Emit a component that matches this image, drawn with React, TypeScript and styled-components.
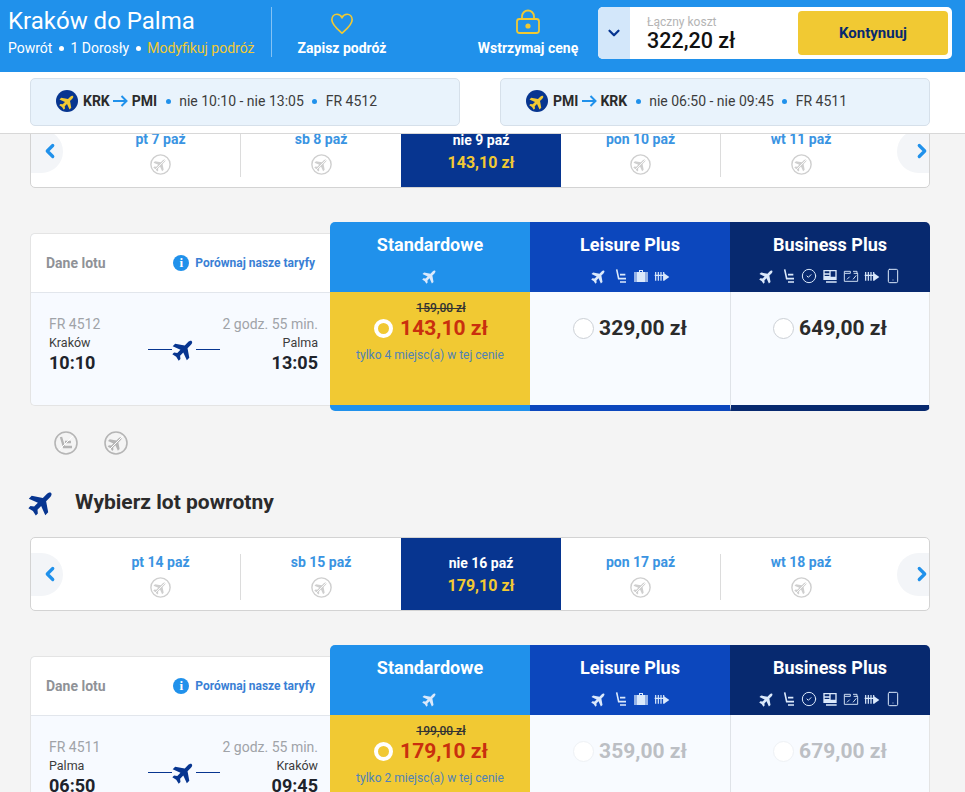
import React from "react";
import styled, { createGlobalStyle } from "styled-components";
import { ChevronDown, ChevronLeft, ChevronRight, CircleCheck, Smartphone } from "lucide-react";

const GlobalStyle = createGlobalStyle`
	* { box-sizing: border-box; }
	html, body { margin: 0; height: 792px; overflow: hidden; }
	body { background: #f4f4f4; font-family: Roboto, "Liberation Sans", sans-serif; color: #2b2b2b; }
`;

const YELLOW = "#f1c933";
const BLUE = "#2091eb";
const ROYAL = "#0c47bd";
const NAVY = "#07296f";
const STRIP_NAVY = "#073590";

const PLANE =
	"M12 1c1.200 0 2 1.500 2 3.500V9l8 5.500V18l-8-3v4.500l2.500 2V24L12 23l-4.500 1v-2.500l2.500-2V15l-8 3v-3.500L10 9V4.500C10 2.500 10.800 1 12 1z";

const Plane = ({ size, color }: { size: number; color: string }) => (
	<svg width={size} height={size} viewBox="0 0 24 24">
		<path d={PLANE} fill={color} transform="rotate(45 12 12)" />
	</svg>
);

const Seat = ({ size, color }: { size: number; color: string }) => (
	<svg width={size} height={size} viewBox="0 0 24 24" fill="none" stroke={color} strokeWidth="2.400">
		<path d="M7 2l3 14h11" />
		<path d="M12 10h8M12 21h9" />
	</svg>
);

const Bag = ({ size, color }: { size: number; color: string }) => (
	<svg width={size} height={size} viewBox="0 0 24 24" fill={color}>
		<path d="M9 3h6v3h4v15H5V6h4zM10.500 4.500V6h3V4.500zM2 6h2v15H2zM20 6h2v15h-2z" fillRule="evenodd" />
	</svg>
);

const FastTrack = ({ size, color }: { size: number; color: string }) => (
	<svg width={size} height={size} viewBox="0 0 24 24" fill="none" stroke={color} strokeWidth="1.800">
		<path d="M2.500 6v13M6.500 6v13M10.500 6v13M14.500 6v13M1 11h15" />
		<path d="M15 8l8 5.500-8 5.500z" fill={color} stroke="none" />
	</svg>
);

const Ticket = ({ size, color }: { size: number; color: string }) => (
	<svg width={size} height={size} viewBox="0 0 24 24" fill={color}>
		<path d="M2 3h20v15H2zM4 5v3h7V5zM13 5v8h7V5zM4 10v2h7v-2zM6 20h16v2H6z" fillRule="evenodd" />
	</svg>
);

const Priority = ({ size, color }: { size: number; color: string }) => (
	<svg width={size} height={size} viewBox="0 0 24 24" fill="none" stroke={color} strokeWidth="1.400">
		<path d="M2 5h9v3H2zM2 8v12h20V8h-6" />
		<path d="M6 17l4-4M15 17l5-6M15 5h6v4" />
	</svg>
);

const NoFlight = ({ size, color, seat }: { size: number; color: string; seat?: boolean }) => (
	<svg width={size} height={size} viewBox="0 0 24 24" fill="none">
		<circle cx="12" cy="12" r="11" stroke={color} strokeWidth="1.600" />
		{seat ? (
			<path d="M7 6l3 10h8M11 11h6" stroke={color} strokeWidth="2.400" />
		) : (
			<g transform="translate(3.500 3.500) scale(0.7)">
				<path d={PLANE} fill={color} transform="rotate(45 12 12)" />
			</g>
		)}
		<path d="M5 19L19 5" stroke="#fff" strokeWidth="1" />
	</svg>
);

const Heart = () => (
	<svg width="24" height="23" viewBox="0 0 26 24" fill="none" stroke={YELLOW} strokeWidth="1.800">
		<path d="M13 22.500C8 18 2 13.500 2 8c0-3.500 2.500-6 5.500-6C9.800 2 11.800 3.200 13 5.500 14.200 3.200 16.200 2 18.500 2c3 0 5.500 2.500 5.500 6 0 5.500-6 10-11 14.500z" />
	</svg>
);

const Padlock = () => (
	<svg width="26" height="26" viewBox="0 0 26 26" fill="none" stroke={YELLOW} strokeWidth="1.800">
		<path d="M7 10V7.500a6 6 0 0 1 12 0V10" />
		<rect x="2" y="10" width="22" height="14" rx="2.500" />
		<circle cx="13" cy="17" r="2.600" fill={YELLOW} stroke="none" />
	</svg>
);

const Arrow = () => (
	<svg width="15" height="12" viewBox="0 0 15 12" fill="none" stroke={BLUE} strokeWidth="2">
		<path d="M0 6h13M8.500 1l5 5-5 5" />
	</svg>
);

const Header = styled.header`
	display: flex;
	align-items: center;
	height: 72px;
	padding-right: 13px;
	background: ${BLUE};
	color: #fff;
`;

const TripInfo = styled.div`
	width: 272px;
	height: 50px;
	margin-top: -8px;
	padding-left: 8px;
	border-right: 1px solid rgba(255, 255, 255, 0.45);
`;

const TripTitle = styled.div`
	font-size: 24px;
	line-height: 28px;
`;

const TripMeta = styled.div`
	display: flex;
	align-items: center;
	margin-top: 5px;
	font-size: 14px;
	line-height: 16px;
`;

const Dot = styled.span<{ $gap: number; $color?: string }>`
	width: 5px;
	height: 5px;
	margin: 0 ${(p) => p.$gap}px;
	border-radius: 50%;
	background: ${(p) => p.$color ?? "#fff"};
`;

const TripLink = styled.span`
	color: ${YELLOW};
`;

const Actions = styled.div`
	flex: 1;
	align-self: flex-start;
	padding-top: 5px;
	display: flex;
	justify-content: space-between;
`;

const ActionItem = styled.div`
	width: 140px;
	display: flex;
	flex-direction: column;
	align-items: center;
	gap: 5px;
	font-size: 14px;
	font-weight: 700;
	line-height: 16px;
`;

const ActionIcon = styled.div`
	height: 30px;
	display: flex;
	align-items: flex-end;
`;

const PriceBox = styled.div`
	width: 354px;
	height: 52px;
	margin-top: -6px;
	display: flex;
	align-items: center;
	background: #fff;
	border-radius: 5px;
	overflow: hidden;
`;

const PriceToggle = styled.div`
	width: 32px;
	height: 100%;
	display: flex;
	align-items: center;
	justify-content: center;
	background: #d3e7fa;
	color: ${STRIP_NAVY};
`;

const PriceText = styled.div`
	flex: 1;
	padding: 3px 0 0 17px;
`;

const PriceLabel = styled.div`
	font-size: 12px;
	line-height: 13px;
	color: #b4b4b4;
`;

const PriceValue = styled.div`
	font-size: 21.500px;
	font-weight: 500;
	line-height: 24px;
	color: #111;
`;

const ContinueButton = styled.button`
	width: 150px;
	height: 44px;
	margin-right: 4px;
	border: 0;
	border-radius: 4px;
	background: ${YELLOW};
	color: ${NAVY};
	font-family: inherit;
	font-size: 15px;
	font-weight: 700;
`;

const SummaryBar = styled.div`
	height: 62px;
	padding: 6px 35px 0 30px;
	display: flex;
	justify-content: space-between;
	background: #fff;
	border-bottom: 1px solid #d8d8d8;
`;

const SummaryCard = styled.div`
	width: 430px;
	height: 48px;
	padding: 0 0 2px 25px;
	display: flex;
	align-items: center;
	background: #e9f3fc;
	border: 1px solid #d6e0ea;
	border-radius: 5px;
	font-size: 14px;
	color: #3c3c3c;
`;

const PlaneBadge = styled.span`
	width: 22px;
	height: 22px;
	margin-right: 5px;
	display: flex;
	align-items: center;
	justify-content: center;
	border-radius: 50%;
	background: ${STRIP_NAVY};
`;

const Route = styled.span`
	display: flex;
	align-items: center;
	gap: 3.500px;
	font-weight: 700;
	color: #2b2b2b;
`;

const Main = styled.main`
	height: 658px;
	overflow: hidden;
	padding: 0 35px 0 30px;
`;

const Scrolled = styled.div`
	margin-top: -20px;
`;

const Strip = styled.div`
	height: 74px;
	display: flex;
	align-items: center;
	justify-content: space-between;
	background: #fff;
	border: 1px solid #d3d3d3;
	border-radius: 5px;
	overflow: hidden;
`;

const StripArrow = styled.div<{ $right?: boolean }>`
	width: 32px;
	height: 43px;
	padding-left: ${(p) => (p.$right ? "14px" : "8px")};
	display: flex;
	align-items: center;
	justify-content: flex-start;
	background: #f3f5f8;
	color: ${BLUE};
	border-radius: ${(p) => (p.$right ? "22px 0 0 22px" : "0 22px 22px 0")};

	svg {
		flex-shrink: 0;
	}
`;

const StripDays = styled.div`
	width: 802px;
	height: 100%;
	padding-left: 2px;
	display: flex;
	align-items: center;
`;

const StripDay = styled.div<{ $active: boolean; $divider: boolean }>`
	width: 160px;
	height: ${(p) => (p.$active ? "100%" : "46px")};
	margin-top: ${(p) => (p.$active ? "0" : "6px")};
	padding-top: ${(p) => (p.$active ? "17px" : "0")};
	display: flex;
	flex-direction: column;
	align-items: center;
	gap: ${(p) => (p.$active ? "6px" : "7px")};
	background: ${(p) => (p.$active ? STRIP_NAVY : "transparent")};
	border-right: ${(p) => (p.$divider ? "1px solid #dcdcdc" : "0")};
`;

const DayLabel = styled.div<{ $active: boolean }>`
	font-size: 14px;
	font-weight: 700;
	line-height: 16px;
	color: ${(p) => (p.$active ? "#fff" : "#3a94e2")};
`;

const DayPrice = styled.div`
	font-size: 16px;
	font-weight: 700;
	line-height: 18px;
	color: ${YELLOW};
`;

const FareSection = styled.section`
	display: flex;
	margin-top: 34px;
`;

const FlightCard = styled.div`
	width: 300px;
	height: 173px;
	margin-top: 11px;
	background: #f7faff;
	border: 1px solid #e4e4e4;
	border-right: 0;
	border-radius: 5px 0 0 5px;
`;

const FlightCardHead = styled.div`
	height: 59px;
	padding: 0 15px 1px;
	display: flex;
	align-items: center;
	justify-content: space-between;
	background: #fff;
	border-bottom: 1px solid #e2e6ec;
	border-radius: 5px 0 0 0;
`;

const CardTitle = styled.div`
	font-size: 14px;
	font-weight: 700;
	color: #8f9297;
`;

const CompareLink = styled.div`
	display: flex;
	align-items: center;
	gap: 6px;
	font-size: 12px;
	font-weight: 700;
	color: #3a7fd5;
`;

const InfoDot = styled.span`
	width: 16px;
	height: 16px;
	display: flex;
	align-items: center;
	justify-content: center;
	border-radius: 50%;
	background: ${BLUE};
	color: #fff;
	font-family: "Liberation Serif", serif;
	font-size: 13px;
	font-weight: 700;
`;

const FlightBody = styled.div`
	padding: 23px 12px 0 18px;
	display: grid;
	grid-template-columns: 1fr auto 1fr;
	align-items: center;
`;

const FlightEnd = styled.div<{ $right?: boolean }>`
	text-align: ${(p) => (p.$right ? "right" : "left")};
`;

const FlightNote = styled.div`
	font-size: 14px;
	line-height: 16px;
	color: #a0a3a8;
	white-space: nowrap;
`;

const FlightCity = styled.div`
	margin-top: 3px;
	font-size: 12.500px;
	line-height: 15px;
	color: #3c3c3c;
`;

const FlightTime = styled.div`
	margin-top: 1px;
	font-size: 18px;
	font-weight: 700;
	line-height: 24px;
	color: #20232b;
`;

const FlightPath = styled.div`
	display: flex;
	align-items: center;
	margin: 7px 0 0 1px;
`;

const PathLine = styled.span`
	width: 24px;
	height: 1px;
	background: ${STRIP_NAVY};
`;

const FareGrid = styled.div`
	width: 600px;
	display: grid;
	grid-template-columns: repeat(3, 200px);
`;

const FareColumn = styled.div``;

const FareHead = styled.div<{ $color: string; $pos: number }>`
	height: 70px;
	padding-top: 13px;
	display: flex;
	flex-direction: column;
	align-items: center;
	gap: 13px;
	background: ${(p) => p.$color};
	color: #fff;
	border-radius: ${(p) => (p.$pos === 0 ? "5px 0 0 0" : p.$pos === 2 ? "0 5px 0 0" : "0")};
`;

const FareName = styled.div`
	font-size: 18px;
	font-weight: 700;
	line-height: 20px;
`;

const FareIcons = styled.div`
	display: flex;
	align-items: center;
	gap: 5px;
`;

const FareBody = styled.div<{ $color: string; $selected: boolean; $pos: number }>`
	height: 119px;
	padding-top: ${(p) => (p.$selected ? "9px" : "23px")};
	display: flex;
	flex-direction: column;
	align-items: center;
	background: ${(p) => (p.$selected ? YELLOW : "#f8fbff")};
	border-bottom: 6px solid ${(p) => p.$color};
	border-right: ${(p) => (p.$pos === 2 ? "1px solid #e4e4e4" : "0")};
	border-left: ${(p) => (p.$pos === 2 ? "1px solid #dfe3e8" : "0")};
	border-radius: ${(p) => (p.$pos === 0 ? "0 0 0 5px" : p.$pos === 2 ? "0 0 5px 0" : "0")};
`;

const OldPrice = styled.div`
	margin-left: 22px;
	font-size: 12px;
	font-weight: 500;
	line-height: 14px;
	color: #333;
	text-decoration: line-through;
`;

const PriceRow = styled.div<{ $selected: boolean }>`
	display: flex;
	align-items: center;
	gap: ${(p) => (p.$selected ? "7px" : "5px")};
	height: 26px;
	padding-left: ${(p) => (p.$selected ? "2px" : "0")};
`;

const Radio = styled.span<{ $selected: boolean; $disabled: boolean }>`
	width: ${(p) => (p.$selected ? "19px" : "21px")};
	height: ${(p) => (p.$selected ? "19px" : "21px")};
	border-radius: 50%;
	background: ${(p) => (p.$selected ? YELLOW : "#fff")};
	border: ${(p) =>
		p.$selected
			? "4px solid #fff"
			: p.$disabled
				? "1px solid #eef1f5"
				: "1px solid #ccd0d6"};
`;

const FarePrice = styled.div<{ $selected: boolean; $disabled: boolean }>`
	font-size: 21px;
	font-weight: 700;
	color: ${(p) => (p.$selected ? "#c9300e" : p.$disabled ? "#bcbfc4" : "#2b2b2b")};
`;

const FareNote = styled.div`
	margin-top: 7px;
	font-size: 12px;
	line-height: 14px;
	color: #4f82b8;
`;

const ExtrasRow = styled.div`
	height: 24px;
	margin-top: 20px;
	padding-left: 24px;
	display: flex;
	gap: 26px;
`;

const SectionTitle = styled.h2`
	height: 30px;
	margin: 32px 0 20px -2px;
	display: flex;
	align-items: center;
	gap: 19px;
	font-size: 21px;
	font-weight: 700;
	color: #2b2b2b;
`;

type FareIcon = (props: { size: number; color: string }) => React.JSX.Element;

const CheckIcon: FareIcon = ({ size, color }) => <CircleCheck size={size} color={color} strokeWidth={1.5} />;
const PhoneIcon: FareIcon = ({ size, color }) => <Smartphone size={size} color={color} strokeWidth={1.5} />;

const FARES: { name: string; color: string; icons: FareIcon[] }[] = [
	{ name: "Standardowe", color: BLUE, icons: [Plane] },
	{ name: "Leisure Plus", color: ROYAL, icons: [Plane, Seat, Bag, FastTrack] },
	{ name: "Business Plus", color: NAVY, icons: [Plane, Seat, CheckIcon, Ticket, Priority, FastTrack, PhoneIcon] },
];

type Flight = {
	number: string;
	from: string;
	to: string;
	depart: string;
	arrive: string;
	oldPrice: string;
	prices: string[];
	seats: number;
	disabled: boolean;
};

const OUTBOUND: Flight = {
	number: "FR 4512",
	from: "Kraków",
	to: "Palma",
	depart: "10:10",
	arrive: "13:05",
	oldPrice: "159,00 zł",
	prices: ["143,10 zł", "329,00 zł", "649,00 zł"],
	seats: 4,
	disabled: false,
};

const RETURN: Flight = {
	number: "FR 4511",
	from: "Palma",
	to: "Kraków",
	depart: "06:50",
	arrive: "09:45",
	oldPrice: "199,00 zł",
	prices: ["179,10 zł", "359,00 zł", "679,00 zł"],
	seats: 2,
	disabled: true,
};

const DateStrip = ({ days, price }: { days: string[]; price: string }) => (
	<Strip>
		<StripArrow>
			<ChevronLeft size={22} strokeWidth={3.5} />
		</StripArrow>
		<StripDays>
			{days.map((day, i) => (
				<StripDay key={day} $active={i === 2} $divider={i === 0 || i === 3}>
					<DayLabel $active={i === 2}>{day}</DayLabel>
					{i === 2 ? <DayPrice>{price}</DayPrice> : <NoFlight size={21} color="#cfcfcf" />}
				</StripDay>
			))}
		</StripDays>
		<StripArrow $right>
			<ChevronRight size={22} strokeWidth={3.5} />
		</StripArrow>
	</Strip>
);

const FareTable = ({ flight }: { flight: Flight }) => (
	<FareSection>
		<FlightCard>
			<FlightCardHead>
				<CardTitle>Dane lotu</CardTitle>
				<CompareLink>
					<InfoDot>i</InfoDot>
					Porównaj nasze taryfy
				</CompareLink>
			</FlightCardHead>
			<FlightBody>
				<FlightEnd>
					<FlightNote>{flight.number}</FlightNote>
					<FlightCity>{flight.from}</FlightCity>
					<FlightTime>{flight.depart}</FlightTime>
				</FlightEnd>
				<FlightPath>
					<PathLine />
					<Plane size={24} color={STRIP_NAVY} />
					<PathLine />
				</FlightPath>
				<FlightEnd $right>
					<FlightNote>2 godz. 55 min.</FlightNote>
					<FlightCity>{flight.to}</FlightCity>
					<FlightTime>{flight.arrive}</FlightTime>
				</FlightEnd>
			</FlightBody>
		</FlightCard>
		<FareGrid>
			{FARES.map((fare, i) => {
				const selected = i === 0;
				const disabled = flight.disabled && !selected;
				return (
					<FareColumn key={fare.name}>
						<FareHead $color={fare.color} $pos={i}>
							<FareName>{fare.name}</FareName>
							<FareIcons>
								{fare.icons.map((Icon, k) => (
									<Icon key={k} size={16} color="#dbe9fb" />
								))}
							</FareIcons>
						</FareHead>
						<FareBody $color={fare.color} $selected={selected} $pos={i}>
							{selected && <OldPrice>{flight.oldPrice}</OldPrice>}
							<PriceRow $selected={selected}>
								<Radio $selected={selected} $disabled={disabled} />
								<FarePrice $selected={selected} $disabled={disabled}>
									{flight.prices[i]}
								</FarePrice>
							</PriceRow>
							{selected && <FareNote>tylko {flight.seats} miejsc(a) w tej cenie</FareNote>}
						</FareBody>
					</FareColumn>
				);
			})}
		</FareGrid>
	</FareSection>
);

const Summary = ({ from, to, times, number }: { from: string; to: string; times: string; number: string }) => (
	<SummaryCard>
		<PlaneBadge>
			<Plane size={17} color={YELLOW} />
		</PlaneBadge>
		<Route>
			{from}
			<Arrow />
			{to}
		</Route>
		<Dot $gap={8.5} $color={BLUE} />
		{times}
		<Dot $gap={8.5} $color={BLUE} />
		{number}
	</SummaryCard>
);

export default function App() {
	return (
		<>
			<GlobalStyle />
			<Header>
				<TripInfo>
					<TripTitle>Kraków do Palma</TripTitle>
					<TripMeta>
						Powrót
						<Dot $gap={6.5} />1 Dorosły
						<Dot $gap={6.5} />
						<TripLink>Modyfikuj podróż</TripLink>
					</TripMeta>
				</TripInfo>
				<Actions>
					<ActionItem>
						<ActionIcon>
							<Heart />
						</ActionIcon>
						Zapisz podróż
					</ActionItem>
					<ActionItem>
						<ActionIcon>
							<Padlock />
						</ActionIcon>
						Wstrzymaj cenę
					</ActionItem>
				</Actions>
				<PriceBox>
					<PriceToggle>
						<ChevronDown size={18} strokeWidth={3} />
					</PriceToggle>
					<PriceText>
						<PriceLabel>Łączny koszt</PriceLabel>
						<PriceValue>322,20 zł</PriceValue>
					</PriceText>
					<ContinueButton>Kontynuuj</ContinueButton>
				</PriceBox>
			</Header>
			<SummaryBar>
				<Summary from="KRK" to="PMI" times="nie 10:10 - nie 13:05" number="FR 4512" />
				<Summary from="PMI" to="KRK" times="nie 06:50 - nie 09:45" number="FR 4511" />
			</SummaryBar>
			<Main>
				<Scrolled>
					<DateStrip days={["pt 7 paź", "sb 8 paź", "nie 9 paź", "pon 10 paź", "wt 11 paź"]} price="143,10 zł" />
					<FareTable flight={OUTBOUND} />
					<ExtrasRow>
						<NoFlight size={24} color="#b5b5b5" seat />
						<NoFlight size={24} color="#b5b5b5" />
					</ExtrasRow>
					<SectionTitle>
						<Plane size={28} color={STRIP_NAVY} />
						Wybierz lot powrotny
					</SectionTitle>
					<DateStrip days={["pt 14 paź", "sb 15 paź", "nie 16 paź", "pon 17 paź", "wt 18 paź"]} price="179,10 zł" />
					<FareTable flight={RETURN} />
				</Scrolled>
			</Main>
		</>
	);
}
